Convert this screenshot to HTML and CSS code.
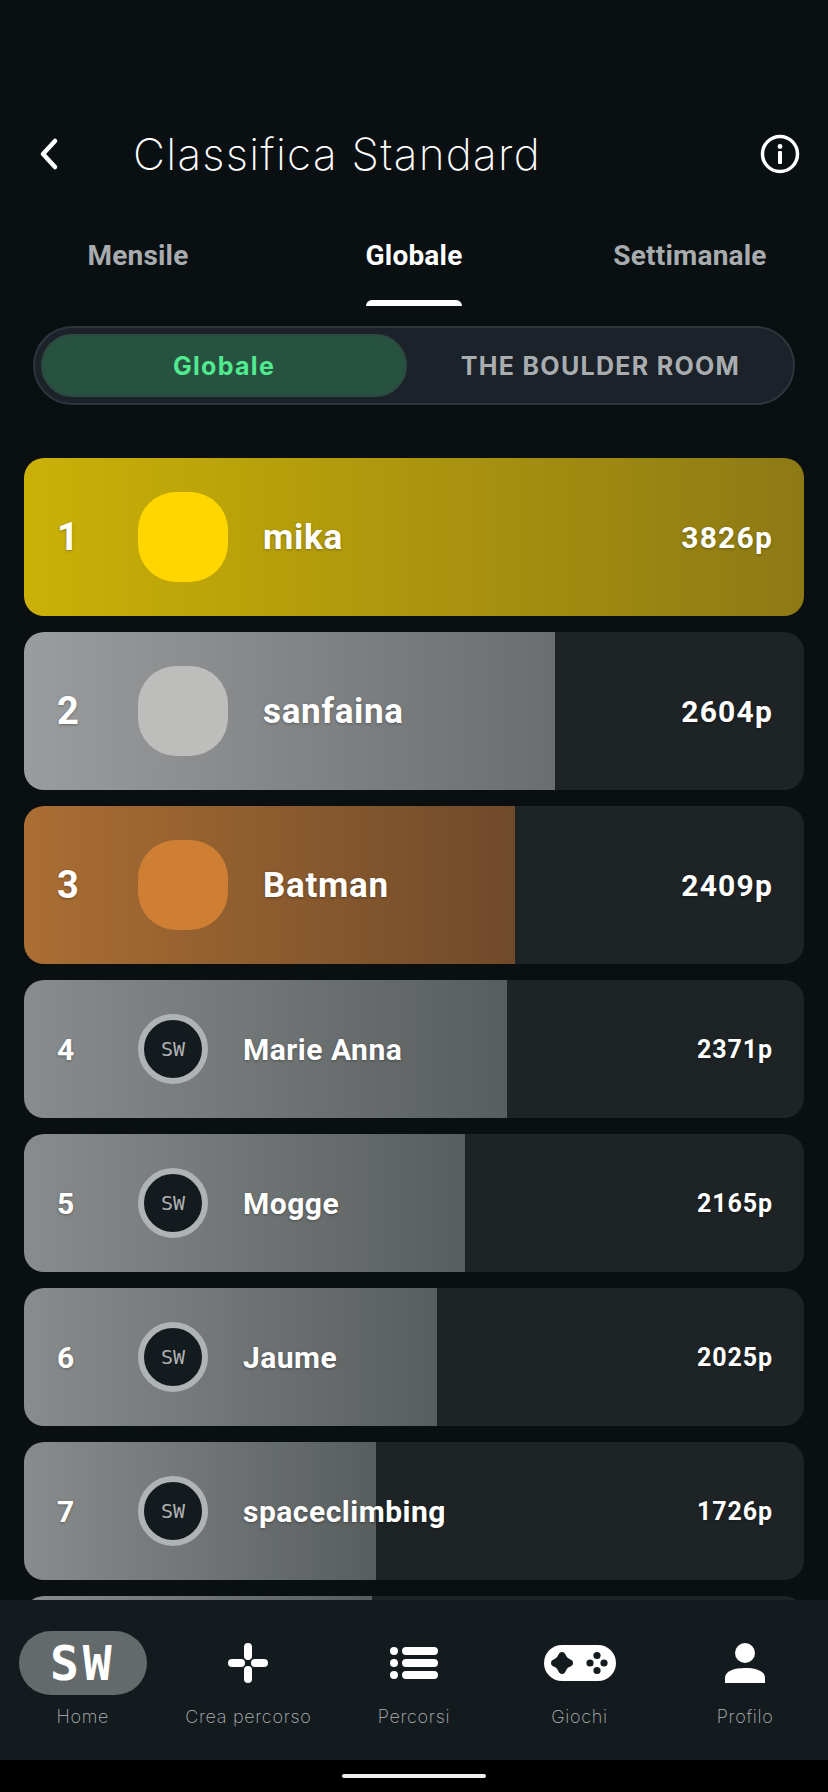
FILE: index.html
```html
<!DOCTYPE html>
<html lang="en">
<head>
  <meta charset="UTF-8">
  <meta name="viewport" content="width=device-width, initial-scale=1.0">
  <title>Classifica Standard</title>
  <link rel="stylesheet" href="styles.css">
</head>
<body>
  <div class="app">
    <header class="topbar">
      <svg class="back" width="24" height="36" viewBox="0 0 24 36"><path d="M19 5 L7 18 L19 31" fill="none" stroke="#fff" stroke-width="4.5" stroke-linecap="round" stroke-linejoin="round"/></svg>
      <h1 class="title">Classifica Standard</h1>
      <svg class="info" width="40" height="40" viewBox="0 0 40 40">
        <circle cx="20" cy="20" r="17.5" fill="none" stroke="#fff" stroke-width="3.5"/>
        <circle cx="20" cy="12.5" r="2.4" fill="#fff"/>
        <rect x="18" y="17" width="4" height="13" rx="1" fill="#fff"/>
      </svg>
    </header>

    <nav class="tabs">
      <div class="tab">Mensile</div>
      <div class="tab active">Globale</div>
      <div class="tab">Settimanale</div>
    </nav>

    <div class="toggle">
      <div class="toggle-item selected">Globale</div>
      <div class="toggle-item other">THE BOULDER ROOM</div>
    </div>

    <div class="list">
      <div class="row big gold" style="background-size: 100% 100%">
        <span class="rank">1</span><span class="blob"></span><span class="name">mika</span><span class="points">3826p</span>
      </div>
      <div class="row big silver" style="background-size: 531px 100%">
        <span class="rank">2</span><span class="blob"></span><span class="name">sanfaina</span><span class="points">2604p</span>
      </div>
      <div class="row big bronze" style="background-size: 491px 100%">
        <span class="rank">3</span><span class="blob"></span><span class="name">Batman</span><span class="points">2409p</span>
      </div>
      <div class="row" style="background-size: 483px 100%">
        <span class="rank">4</span><span class="badge">SW</span><span class="name">Marie Anna</span><span class="points">2371p</span>
      </div>
      <div class="row" style="background-size: 441px 100%">
        <span class="rank">5</span><span class="badge">SW</span><span class="name">Mogge</span><span class="points">2165p</span>
      </div>
      <div class="row" style="background-size: 413px 100%">
        <span class="rank">6</span><span class="badge">SW</span><span class="name">Jaume</span><span class="points">2025p</span>
      </div>
      <div class="row" style="background-size: 352px 100%">
        <span class="rank">7</span><span class="badge">SW</span><span class="name">spaceclimbing</span><span class="points">1726p</span>
      </div>
      <div class="row" style="background-size: 348px 100%"></div>
    </div>

    <nav class="bottom">
      <div class="nav-item">
        <div class="nav-icon home"><span class="logo">SW</span></div>
        <span class="nav-label">Home</span>
      </div>
      <div class="nav-item">
        <div class="nav-icon">
          <svg width="40" height="40" viewBox="0 0 40 40" fill="#fff">
            <rect x="16" y="0" width="8" height="17" rx="4"/>
            <rect x="16" y="23" width="8" height="17" rx="4"/>
            <rect x="0" y="16" width="17" height="8" rx="4"/>
            <rect x="23" y="16" width="17" height="8" rx="4"/>
          </svg>
        </div>
        <span class="nav-label">Crea percorso</span>
      </div>
      <div class="nav-item">
        <div class="nav-icon">
          <svg width="48" height="40" viewBox="0 0 48 40" fill="#fff">
            <circle cx="4" cy="8" r="4"/><circle cx="4" cy="20" r="4"/><circle cx="4" cy="32" r="4"/>
            <rect x="12" y="4" width="36" height="8" rx="4"/>
            <rect x="12" y="16" width="36" height="8" rx="4"/>
            <rect x="12" y="28" width="36" height="8" rx="4"/>
          </svg>
        </div>
        <span class="nav-label">Percorsi</span>
      </div>
      <div class="nav-item">
        <div class="nav-icon">
          <svg width="72" height="36" viewBox="0 0 72 36">
            <rect x="0" y="0" width="72" height="36" rx="18" fill="#fff"/>
            <path d="M18 7 C20 7 21 8.500 22 10.500 C23 12.500 24 13.500 26 14.200 C28 15 29 16.300 29 18 C29 19.700 28 21 26 21.800 C24 22.500 23 23.500 22 25.500 C21 27.500 20 29 18 29 C16 29 15 27.500 14 25.500 C13 23.500 12 22.500 10 21.800 C8 21 7 19.700 7 18 C7 16.300 8 15 10 14.200 C12 13.500 13 12.500 14 10.500 C15 8.500 16 7 18 7 Z" fill="#141b1e"/>
            <circle cx="53" cy="10.500" r="3.600" fill="#141b1e"/>
            <circle cx="60" cy="18" r="3.600" fill="#141b1e"/>
            <circle cx="53" cy="25.500" r="3.600" fill="#141b1e"/>
            <circle cx="46" cy="18" r="3.600" fill="#141b1e"/>
          </svg>
        </div>
        <span class="nav-label">Giochi</span>
      </div>
      <div class="nav-item">
        <div class="nav-icon">
          <svg width="40" height="40" viewBox="0 0 40 40" fill="#fff">
            <circle cx="20" cy="10" r="10"/>
            <path d="M0 40 V35 C0 28 9 25 20 25 C31 25 40 28 40 35 V40 Z"/>
          </svg>
        </div>
        <span class="nav-label">Profilo</span>
      </div>
    </nav>

    <div class="gesture"><div class="gesture-bar"></div></div>
  </div>
</body>
</html>
```

FILE: styles.css
```css
* {
  box-sizing: border-box;
}

body {
  margin: 0;
  background-color: #0a0f12;
  color: #fff;
  font-family: Roboto, sans-serif;
}

.app {
  width: 828px;
  height: 1792px;
  padding-top: 100px;
  display: flex;
  flex-direction: column;
  overflow: hidden;
}

/* header */
.topbar {
  height: 108px;
  flex: none;
  padding: 0 28px 0 36px;
  display: flex;
  align-items: center;
}

.back {
  flex: none;
}

.title {
  flex: 1;
  margin: 0 0 0 73px;
  font-family: Inter, sans-serif;
  font-weight: 200;
  font-size: 44px;
  letter-spacing: 1.3px;
  white-space: nowrap;
}

.info {
  flex: none;
}

/* tabs */
.tabs {
  height: 98px;
  flex: none;
  display: grid;
  grid-template-columns: repeat(3, 1fr);
  justify-items: center;
}

.tab {
  height: 98px;
  padding-top: 30px;
  font-size: 28px;
  font-weight: 700;
  line-height: 36px;
  letter-spacing: 0.2px;
  color: #a8acae;
}

.tab.active {
  color: #fff;
  position: relative;
}

.tab.active::after {
  content: "";
  position: absolute;
  left: 0;
  right: 0;
  bottom: 0;
  height: 6px;
  border-radius: 6px 6px 0 0;
  background: #fff;
}

/* toggle */
.toggle {
  height: 79px;
  flex: none;
  margin: 20px 33px 0;
  padding: 6px;
  display: grid;
  grid-template-columns: 366px 1fr;
  background: #1b2229;
  border: 2px solid #2d363c;
  border-radius: 40px;
}

.toggle-item {
  display: flex;
  align-items: center;
  justify-content: center;
  font-family: Inter, sans-serif;
  font-weight: 700;
  font-size: 25px;
  letter-spacing: 1.3px;
  color: #aaadb0;
  white-space: nowrap;
}

.toggle-item.other {
  padding-left: 7px;
}

.toggle-item.selected {
  background: #285240;
  border: 2px solid #2d4a41;
  border-radius: 32px;
  color: #50ea90;
}

/* leaderboard */
.list {
  flex: 1;
  min-height: 0;
  padding: 53px 24px 0;
  display: flex;
  flex-direction: column;
  gap: 16px;
  overflow: hidden;
}

.row {
  flex: none;
  height: 138px;
  padding: 0 31px 0 33px;
  display: flex;
  align-items: center;
  border-radius: 20px;
  background-color: #1e2326;
  background-image: linear-gradient(90deg, #888c8c, #585d5e);
  background-repeat: no-repeat;
  font-weight: 700;
  text-shadow: 0 1px 3px rgba(0, 0, 0, 0.3);
}

.row.big {
  height: 158px;
}

.row.gold {
  background-image: linear-gradient(90deg, #cbb106, #8d7a15);
}

.row.silver {
  background-image: linear-gradient(90deg, #9b9c9d, #6a6e70);
}

.row.bronze {
  background-image: linear-gradient(90deg, #ab6e33, #6f4a2a);
}

.rank {
  width: 81px;
  flex: none;
  font-size: 30px;
}

.big .rank {
  font-size: 38px;
}

.blob {
  width: 90px;
  height: 90px;
  flex: none;
  border-radius: 38px;
  margin-right: 35px;
}

.gold .blob {
  background: #ffd600;
}

.silver .blob {
  background: #bdbdbb;
}

.bronze .blob {
  background: #cf7f34;
}

.badge {
  width: 70px;
  height: 70px;
  flex: none;
  margin-right: 35px;
  display: flex;
  align-items: center;
  justify-content: center;
  border: 6px solid #b0b3b3;
  border-radius: 50%;
  background: #141b1e;
  font-family: "DejaVu Sans Mono", monospace;
  font-weight: 400;
  font-size: 20px;
  color: #aeb1b2;
  text-shadow: none;
}

.name {
  flex: 1;
  font-size: 30px;
  letter-spacing: 0.5px;
  white-space: nowrap;
}

.big .name {
  font-size: 35px;
  letter-spacing: 0.7px;
}

.points {
  flex: none;
  font-size: 25px;
  letter-spacing: 0.9px;
}

.big .points {
  font-size: 30px;
  letter-spacing: 1.2px;
}

/* bottom nav */
.bottom {
  height: 160px;
  flex: none;
  padding-top: 31px;
  display: grid;
  grid-template-columns: repeat(5, 165.6px);
  background: #141b1e;
}

.nav-item {
  display: flex;
  flex-direction: column;
  align-items: center;
}

.nav-icon {
  width: 128px;
  height: 64px;
  display: flex;
  align-items: center;
  justify-content: center;
}

.nav-icon.home {
  background: #646a6b;
  border-radius: 32px;
}

.logo {
  font-family: "DejaVu Sans Mono", monospace;
  font-weight: 700;
  font-size: 48px;
  letter-spacing: 4px;
  color: #fff;
}

.nav-label {
  margin-top: 10px;
  font-family: Inter, sans-serif;
  font-weight: 200;
  font-size: 18px;
  line-height: 24px;
  letter-spacing: 0.7px;
  color: #b0b4b5;
  white-space: nowrap;
}

/* gesture bar */
.gesture {
  height: 32px;
  flex: none;
  display: flex;
  justify-content: center;
  align-items: center;
  background: #000;
}

.gesture-bar {
  width: 144px;
  height: 4px;
  border-radius: 2px;
  background: #f2f2f2;
}
```
